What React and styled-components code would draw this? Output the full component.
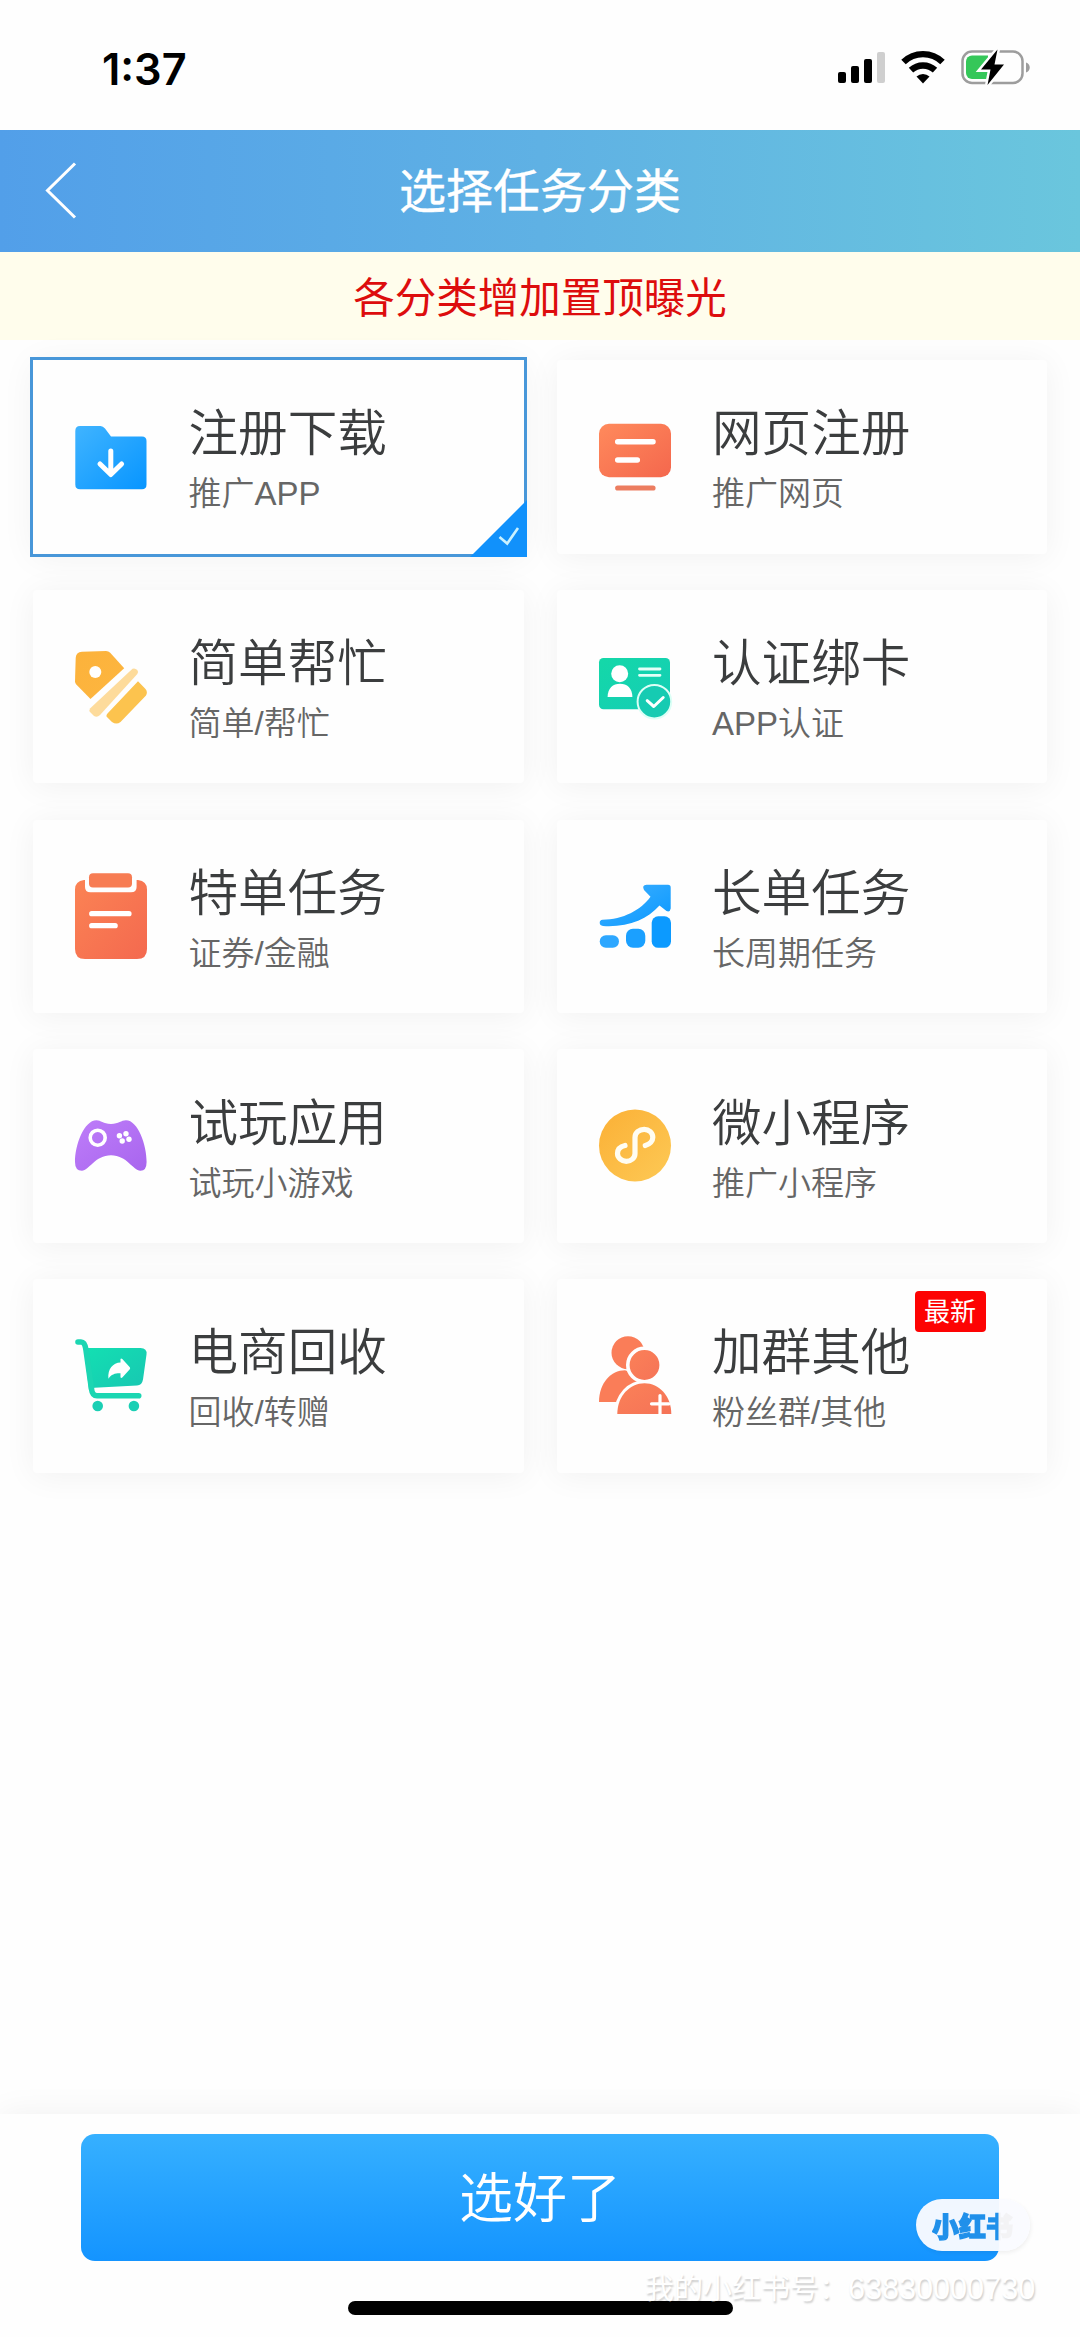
import React, { useState } from "react";
import styled, { createGlobalStyle } from "styled-components";

const GlobalStyle = createGlobalStyle`
  * {
    box-sizing: border-box;
  }

  body {
    margin: 0;
    background: #fefefe;
    font-family: "Liberation Sans", "Noto Sans CJK SC", sans-serif;
  }

  svg {
    display: block;
  }
`;

const Page = styled.div`
  display: flex;
  flex-direction: column;
  width: 1080px;
  height: 2337px;
  overflow: hidden;
`;

const StyledStatusBar = styled.div`
  display: flex;
  flex: none;
  justify-content: space-between;
  height: 130px;
  padding: 45px 49px 0 102px;

  .time {
    height: 50px;
    line-height: 48px;
    font-family: Inter, sans-serif;
    font-size: 43.3px;
    font-weight: 600;
    color: #000;
  }
`;

const StyledHeader = styled.header`
  display: grid;
  flex: none;
  grid-template-columns: 120px 1fr 120px;
  align-items: center;
  height: 122px;
  background: linear-gradient(90deg, #529fe9 0%, #5fb1e4 50%, #6ac6dd 100%);

  .back {
    padding: 0 0 0 44px;
    border: 0;
    background: none;
  }

  h1 {
    margin: 0;
    padding-top: 2px;
    font-size: 47px;
    line-height: 60px;
    font-weight: 400;
    text-align: center;
    color: #fff;
    -webkit-text-stroke: 0.4px #fff;
  }
`;

const Notice = styled.div`
  flex: none;
  height: 88px;
  line-height: 94px;
  background: #fffdec;
  font-size: 41.5px;
  text-align: center;
  color: #dd0d0d;
`;

const Grid = styled.main`
  display: grid;
  flex: 1;
  grid-template-columns: 1fr 1fr;
  grid-auto-rows: 193.5px;
  align-content: start;
  gap: 36.3px 33px;
  padding: 20px 33px 0;
`;

const Card = styled.div`
  position: relative;
  display: flex;
  align-items: center;
  gap: 41.5px;
  padding-left: 42px;
  border-radius: ${(props) => (props.$selected ? "0" : "4px")};
  background: #fefefe;
  box-shadow: 0 3px 33px rgba(0, 0, 0, 0.055);
  outline: ${(props) => (props.$selected ? "3px solid #4897d9" : "none")};
  cursor: pointer;
`;

const CardText = styled.div`
  display: flex;
  flex-direction: column;
  padding-top: 11px;

  .title {
    font-size: 49.6px;
    line-height: 64px;
    font-weight: 350;
    color: #3b3d3e;
  }

  .desc {
    font-size: 33px;
    line-height: 56px;
    font-weight: 350;
    color: #666;
  }
`;

const Badge = styled.span`
  position: absolute;
  top: 12px;
  left: 358px;
  width: 71px;
  height: 41px;
  border-radius: 4px;
  background: #fd0303;
  font-size: 26px;
  line-height: 42px;
  text-align: center;
  color: #fff;
`;

const SelectedMark = styled.svg`
  position: absolute;
  right: -3px;
  bottom: -3px;
`;

const Footer = styled.footer`
  position: relative;
  display: flex;
  flex: none;
  flex-direction: column;
  align-items: center;
  height: 223px;
  padding-top: 20px;
  background: #fefefe;
  box-shadow: 0 0 32px rgba(0, 0, 0, 0.06);
`;

const SubmitButton = styled.button`
  width: 918px;
  height: 127px;
  margin-bottom: 40px;
  padding: 3px 0 0;
  border: 0;
  border-radius: 14px;
  background: linear-gradient(180deg, #36b0ff, #1494ff);
  font-family: inherit;
  font-size: 54px;
  line-height: 124px;
  font-weight: 350;
  color: #fff;
`;

const HomeIndicator = styled.div`
  width: 385px;
  height: 14px;
  border-radius: 7px;
  background: #000;
`;

const Logo = styled.div`
  position: absolute;
  top: 85px;
  left: 916px;
  width: 114px;
  height: 52px;
  padding-left: 16px;
  border-radius: 26px;
  background: rgba(250, 251, 255, 0.96);
  box-shadow: 1px 2px 4px rgba(0, 0, 0, 0.06);
  line-height: 53px;

  span {
    display: block;
    background: linear-gradient(90deg, #2090ea 66px, #f3f3f5 67px);
    background-clip: text;
    font-family: "Noto Sans CJK SC", sans-serif;
    font-size: 27px;
    font-weight: 900;
    color: transparent;
    -webkit-text-stroke: 1.4px transparent;
  }
`;

const AccountTag = styled.div`
  position: absolute;
  top: 154px;
  left: 645px;
  font-size: 29px;
  line-height: 40px;
  white-space: nowrap;
  color: #fff;
  text-shadow: 1px 2px 2px rgba(0, 0, 0, 0.2);

  span {
    font-size: 30.6px;
  }
`;

const StatusIcons = () => (
  <svg width="194" height="44" viewBox="836 46 194 44">
    <rect x="837" y="73" width="8" height="11" rx="2" />
    <rect x="850" y="67" width="8" height="17" rx="2" />
    <rect x="863" y="60" width="8" height="24" rx="2" />
    <rect x="876" y="53" width="8" height="31" rx="2" fill="#cfcfcf" />
    <g fill="none" stroke="#000" strokeWidth="6.4">
      <path d="M902.5 63a28 28 0 0 1 39 0" />
      <path d="M910 71.200a17.500 17.500 0 0 1 24 0" />
    </g>
    <path d="M915.500 77.500a9.500 9.500 0 0 1 13 0L922 84.500z" />
    <rect x="961.500" y="52.500" width="60" height="31.500" rx="9.500" fill="none" stroke="#9d9d9d" strokeWidth="2.500" />
    <path d="M1025 63.500c5 1.500 5 8.500 0 10z" fill="#9d9d9d" />
    <path d="M971 56.500h16v23.500h-16a6 6 0 0 1-6-6V62.500a6 6 0 0 1 6-6z" fill="#35c759" />
    <path
      d="M996.500 50.500L980 70.500h9.500L986.500 86l16.500-20.500h-9.500z"
      stroke="#fefefe"
      strokeWidth="5"
      paintOrder="stroke"
    />
  </svg>
);

const Gradient = ({ id, from, to }) => (
  <linearGradient id={id} x1="0" y1="0" x2="1" y2="1">
    <stop offset="0" stopColor={from} />
    <stop offset="1" stopColor={to} />
  </linearGradient>
);

const Icon = ({ children }) => (
  <svg width="72" height="88" viewBox="0 0 72 88" fill="none" overflow="visible" strokeLinecap="round" strokeLinejoin="round">
    {children}
  </svg>
);

const FolderIcon = () => (
  <Icon>
    <Gradient id="folder" from="#40b4ff" to="#0795ff" />
    <path
      fill="url(#folder)"
      d="M5 13H25.500Q28 13 30 15.500L36 23.500H67Q71.500 23.500 71.500 28V71.500Q71.500 76.300 67 76.300H5Q0.300 76.300 0.300 71.500V18Q0.300 13 5 13z"
    />
    <path stroke="#fff" strokeWidth="5" d="M35.800 38V60.500M25 51L35.800 61.500L46.600 51" />
  </Icon>
);

const WebIcon = () => (
  <Icon>
    <Gradient id="web" from="#ff8a5c" to="#f4674d" />
    <rect fill="url(#web)" y="10.700" width="72" height="53.600" rx="10" />
    <path stroke="#fff" strokeWidth="5.500" d="M18.700 28.700H54M18.700 47H38.300" />
    <path stroke="#ec7d60" strokeWidth="5.200" d="M18.700 75H54" />
  </Icon>
);

const TagIcon = () => (
  <Icon>
    <Gradient id="tag" from="#fcb23b" to="#fdb640" />
    <path
      fill="url(#tag)"
      d="M7 8.700L31 8Q33.500 8 35.200 9.700L49.200 25.300L15.500 56L1.300 41.500Q0 40 0 38.300L0.700 15Q0.900 9 7 8.700z"
    />
    <circle cx="20.300" cy="29" r="6" fill="#fff" />
    <path fill="#fddb9b" d="M57.500 25.800Q60 24.800 62.300 27Q63.800 29 62.300 31L25 72Q22 75 19 73L15.500 69.500Q13.500 67.500 15 65.500z" />
    <path fill="#fcc34e" d="M63 38.300L70.500 46Q73 49 71 52.500L45.500 79Q41.500 82 37 79L31.500 73.500Q31 72 32.500 70.500z" />
  </Icon>
);

const IdCardIcon = () => (
  <Icon>
    <Gradient id="idcard" from="#14d8a8" to="#15cdb6" />
    <rect fill="url(#idcard)" y="15" width="71" height="51.300" rx="4.500" />
    <circle cx="20.700" cy="30.700" r="8.500" fill="#fff" />
    <path fill="#fff" d="M8.600 54C8.600 45 14 40.700 21 40.700S33.400 45 33.400 54z" />
    <path stroke="#e5fff8" strokeWidth="2.800" d="M40.500 26H61M40.500 32.300H61" />
    <circle cx="55.400" cy="58.700" r="16.800" fill="#16cbb2" stroke="#dcfff6" strokeWidth="2" />
    <path stroke="#fff" strokeWidth="3" d="M48.200 57.700L54.800 63.500L64.200 54.500" />
  </Icon>
);

const ClipboardIcon = () => (
  <Icon>
    <Gradient id="clip" from="#fb8354" to="#f4694f" />
    <path
      fill="url(#clip)"
      d="M9 8H10V15Q10 20.300 15.500 20.300H56Q61.600 20.300 61.600 15V8H63Q72 9 72 17.500V77Q72 87 62 87H10Q0 87 0 77V17.500Q0 9 9 8z"
    />
    <rect fill="#f77c53" x="14" y="1.200" width="43" height="14.200" rx="4" />
    <path stroke="#fff" strokeWidth="5.200" d="M16.700 41.700H54M16.700 53.700H40.200" />
  </Icon>
);

const ChartIcon = () => (
  <Icon>
    <Gradient id="chart" from="#41b1ff" to="#0998ff" />
    <path
      fill="url(#chart)"
      d="M3.500 47.700C24 47.700 42 38 51.500 24.800L45 18Q42.500 13 47.500 12.700H69Q71.700 12.700 71.700 15.500V36.500Q71 40.500 67.500 39L60.500 33.500C48 47.500 29 55.500 4 54Q0.700 53.500 0.700 50.800Q0.700 48 3.500 47.700z"
    />
    <rect fill="#2da7ff" x="0.700" y="63.300" width="19.300" height="12.500" rx="6.200" />
    <rect fill="#1ba0ff" x="27" y="56.700" width="19.300" height="19.100" rx="7" />
    <rect fill="#0c9aff" x="52.700" y="44.300" width="19.300" height="31.500" rx="6.500" />
  </Icon>
);

const GamepadIcon = () => (
  <Icon>
    <Gradient id="game" from="#be7df9" to="#a865ee" />
    <path
      fill="url(#game)"
      d="M21.500 18.300C26 18.300 28 22 36 22S46 18.300 51 18.300C63 18.300 71.600 43 71.600 60Q71.600 68.700 65.500 68.700C58 68.700 52 53.300 36 53.300S14 68.700 6.900 68.700Q0 68.700 0 60C0 43 9 18.300 21.500 18.300z"
    />
    <circle cx="22.700" cy="35.700" r="7.500" stroke="#fff" strokeWidth="3.600" />
    <g fill="#fff">
      <circle cx="44.400" cy="33.700" r="2.700" />
      <circle cx="51" cy="31.700" r="2.700" />
      <circle cx="47.200" cy="39" r="2.700" />
      <circle cx="54" cy="37.300" r="2.700" />
    </g>
  </Icon>
);

const MiniProgramIcon = () => (
  <Icon>
    <Gradient id="mini" from="#fbb036" to="#fdc955" />
    <circle cx="36" cy="43.500" r="36" fill="url(#mini)" />
    <path
      stroke="#fffdf2"
      strokeWidth="5.200"
      d="M46.300 43.500C51 42.300 53.800 39 53.800 35.300C53.800 30.800 50 27.300 45.200 27.300S36 30.700 36 35.500V51.500C36 56 32 59.300 27.300 59.300S18.500 55.800 18.500 51.500C18.500 47.500 21.500 44.500 26 43.500"
    />
  </Icon>
);

const CartIcon = () => (
  <Icon>
    <Gradient id="cart" from="#13e0b2" to="#18c6b2" />
    <path
      fill="url(#cart)"
      d="M9 16H65.500Q72.300 16 71.500 22.500L68 47.500Q67 53.300 62 53.500L19.500 55.700L14 58z"
    />
    <path stroke="#1bd6b2" strokeWidth="5.600" d="M3 10H6C9 10 10.300 13 11 18L16.500 57Q17.300 63.800 22 63.800H63.700" />
    <path
      fill="#fff"
      d="M33.400 46.700C32.500 37 38 30.700 45.500 30.500V27Q46 25.800 47.300 27L54.800 35.200Q55.500 36.300 54.800 37.300L47.300 45.500Q46 46.500 45.500 45.200V41.200C40.500 41 36.500 42 33.400 46.700z"
    />
    <circle cx="22.700" cy="74" r="5.300" fill="#1bcfb4" />
    <circle cx="58.900" cy="74" r="5.300" fill="#1bcfb4" />
  </Icon>
);

const GroupIcon = () => (
  <Icon>
    <Gradient id="group" from="#fb8158" to="#f57357" />
    <path fill="#fa7d58" d="M0 70C0 51 12 38.300 26 38.300L45 45L35 70z" />
    <circle cx="29" cy="20.700" r="16.500" fill="#fa7d58" />
    <circle cx="45.500" cy="33" r="16.700" fill="url(#group)" stroke="#fefefe" strokeWidth="3.600" />
    <path
      fill="url(#group)"
      stroke="#fefefe"
      strokeWidth="6"
      paintOrder="stroke"
      strokeLinejoin="miter"
      d="M18.300 82C18.300 64 31 51.300 45.500 51.300S72.300 64 72.300 82z"
    />
    <path stroke="#fff" strokeWidth="3.200" d="M52.500 71.800H70M61 63.500V83" />
  </Icon>
);

const categories = [
  { title: "注册下载", desc: "推广APP", icon: FolderIcon },
  { title: "网页注册", desc: "推广网页", icon: WebIcon },
  { title: "简单帮忙", desc: "简单/帮忙", icon: TagIcon },
  { title: "认证绑卡", desc: "APP认证", icon: IdCardIcon },
  { title: "特单任务", desc: "证券/金融", icon: ClipboardIcon },
  { title: "长单任务", desc: "长周期任务", icon: ChartIcon },
  { title: "试玩应用", desc: "试玩小游戏", icon: GamepadIcon },
  { title: "微小程序", desc: "推广小程序", icon: MiniProgramIcon },
  { title: "电商回收", desc: "回收/转赠", icon: CartIcon },
  { title: "加群其他", desc: "粉丝群/其他", icon: GroupIcon, badge: "最新" },
];

const CategoryCard = ({ item, selected, onClick }) => {
  const ItemIcon = item.icon;
  return (
    <Card $selected={selected} onClick={onClick}>
      <ItemIcon />
      <CardText>
        <span className="title">{item.title}</span>
        <span className="desc">{item.desc}</span>
      </CardText>
      {item.badge && <Badge>{item.badge}</Badge>}
      {selected && (
        <SelectedMark width="57" height="57" viewBox="0 0 57 57">
          <path fill="#1191fb" d="M57 0V57H0z" />
          <path fill="none" stroke="#c9f1ff" strokeWidth="2.600" d="M29.500 37L37.200 43.500L48 28" />
        </SelectedMark>
      )}
    </Card>
  );
};

const App = () => {
  const [current, setCurrent] = useState(0);

  return (
    <Page>
      <GlobalStyle />
      <StyledStatusBar>
        <span className="time">1:37</span>
        <StatusIcons />
      </StyledStatusBar>
      <StyledHeader>
        <button className="back">
          <svg width="34" height="60" viewBox="0 0 34 60" fill="none" stroke="#fff" strokeWidth="3">
            <path d="M31 2.500L3.500 29.500L31 56.500" />
          </svg>
        </button>
        <h1>选择任务分类</h1>
      </StyledHeader>
      <Notice>各分类增加置顶曝光</Notice>
      <Grid>
        {categories.map((item, index) => (
          <CategoryCard
            key={item.title}
            item={item}
            selected={index === current}
            onClick={() => setCurrent(index)}
          />
        ))}
      </Grid>
      <Footer>
        <SubmitButton>选好了</SubmitButton>
        <HomeIndicator />
        <AccountTag>
          我的小红书号：<span>63830000730</span>
        </AccountTag>
        <Logo>
          <span>小红书</span>
        </Logo>
      </Footer>
    </Page>
  );
};

export default App;
